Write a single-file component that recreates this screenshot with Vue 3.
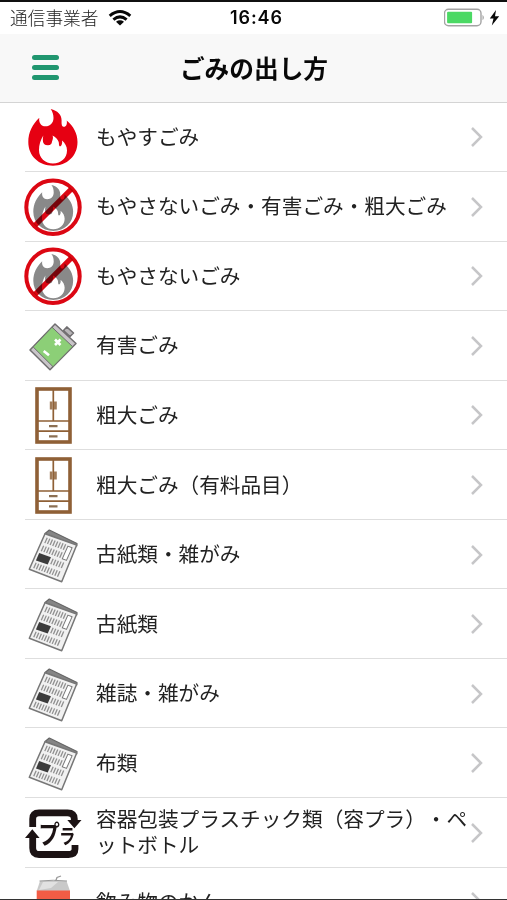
<script setup>
const rows = [
  { icon: 'fire', label: 'もやすごみ' },
  { icon: 'nofire', label: 'もやさないごみ・有害ごみ・粗大ごみ' },
  { icon: 'nofire', label: 'もやさないごみ' },
  { icon: 'battery', label: '有害ごみ' },
  { icon: 'cabinet', label: '粗大ごみ' },
  { icon: 'cabinet', label: '粗大ごみ（有料品目）' },
  { icon: 'paper', label: '古紙類・雑がみ' },
  { icon: 'paper', label: '古紙類' },
  { icon: 'paper', label: '雑誌・雑がみ' },
  { icon: 'paper', label: '布類' },
  { icon: 'plastic', label: '容器包装プラスチック類（容プラ）・ペ\nットボトル' },
  { icon: 'can', label: '飲み物のかん' },
]
const flame =
  'M27.700 2C34.500 3.500 38.800 8 38.600 13.500C38.500 16.500 38.500 19.300 40.500 19.800C43 20.200 44.500 17 43.700 13.500C50.500 19 54.500 26.500 54.500 35C54.500 49 44 58.700 30 58.700C16 58.700 5.300 49 5.300 35C5.300 25 9.500 17.500 16.300 10.700C15.500 15.500 18 19.300 22.500 19.300C27 19.300 30.500 16 30.500 11C30.500 7.500 29.500 4.500 27.700 2Z' +
  'M20.300 28.500C17.500 33 16 38 16 43C16 51 22 56.500 30 56.500C38 56.500 44 51 44 43.500C44 39.500 42 36 39 33.500C39.500 36.500 38.800 38.700 37 39.500C35.500 39 36.200 37 35.700 35C34.700 32 32.500 30 29.500 28.500C30.500 30.500 29.800 32.500 29 34.500C28.800 37 27.500 38.200 25 38.200C21.500 38.200 19.800 36.500 19.800 33C19.800 31.300 20 30 20.300 28.500Z'
</script>

<template>
  <div class="screen">
    <div class="status">
      <span class="carrier">通信事業者</span>
      <svg class="wifi" width="24" height="18" viewBox="0 0 24 18">
        <path d="M1.700 6.800Q12 -1.700 22.300 6.800M5.400 10.600Q12 5.200 18.600 10.600" fill="none" stroke="#080808" stroke-width="3" />
        <path d="M8 12.700Q12 9.800 16 12.700L12 16.500Z" fill="#080808" />
      </svg>
      <span class="time">16:46</span>
      <svg class="battery" width="56" height="20" viewBox="0 0 56 20">
        <rect x="0.500" y="1.200" width="36.500" height="16.600" rx="4" fill="#fff" stroke="#a3a3a3" stroke-width="1.400" />
        <rect x="3.100" y="3.700" width="25" height="11.600" rx="1" fill="#4bd964" />
        <path d="M38.500 6.700Q41.300 9.500 38.500 12.300Z" fill="#a3a3a3" />
        <path d="M52 2L45.800 10.500H49.500L47.800 17.500L55.200 8.300H51Z" fill="#080808" />
      </svg>
    </div>
    <header class="nav">
      <div class="menu"><i></i><i></i><i></i></div>
      <h1>ごみの出し方</h1>
    </header>
    <ul class="list">
      <li v-for="(row, i) in rows" :key="i" class="row">
        <svg class="icon" width="60" height="60" viewBox="0 0 60 60">
          <path v-if="row.icon === 'fire'" :d="flame" fill="#e60012" fill-rule="evenodd" />
          <g v-else-if="row.icon === 'nofire'">
            <path :d="flame" fill="#898989" fill-rule="evenodd" transform="translate(6 6.500) scale(.81)" />
            <circle cx="30" cy="30.300" r="26.700" fill="none" stroke="#dc0713" stroke-width="4" />
            <path class="slash" d="M12 48.300L48.500 11.800" stroke="#dc0713" stroke-width="5.200" />
          </g>
          <g v-else-if="row.icon === 'battery'" stroke="#706e70" stroke-width="1.500" stroke-linejoin="round">
            <path d="M40.500 14.500L43.800 10.900L50.500 17L47 20.500Z" fill="#b8b5b8" />
            <path d="M32 8L53 27.500L27 53.800L7 34Z" fill="#c8c4c8" />
            <path d="M29 11.200L49.700 30.700L30 50.700L10.200 31Z" fill="#8ccf77" stroke-width="1" />
            <path d="M32 23.500L37.500 29M37.500 23.500L32 29M20.700 35L26 39.300" fill="none" stroke="#fff" stroke-width="2.600" />
          </g>
          <g v-else-if="row.icon === 'cabinet'" fill="none" stroke="#8f6036">
            <rect x="14" y="4" width="33" height="53" stroke-width="3.600" />
            <path d="M30.300 5V36M14 36H47M14 46.200H47" stroke-width="1.700" />
            <path d="M28.200 16.500V24.500M32.400 16.500V24.500" stroke="#a07b59" stroke-width="2.800" />
            <path d="M26 41.200H34.500M26 51.300H34.500" stroke="#8c7054" stroke-width="2.200" />
          </g>
          <g v-else-if="row.icon === 'paper'" stroke-linejoin="round">
            <path d="M22 8.500L26.300 5L54 18.500L53.700 21Z" fill="#858585" stroke="#666" stroke-width="1.200" />
            <path d="M22 8.700L53.700 20L38.700 56.700L6.300 44.300Z" fill="#f1f1f1" stroke="#777" stroke-width="1.500" />
            <g transform="matrix(.942 .336 -.403 .914 22 8.700)" fill="none" stroke="#909090">
              <path d="M3 6H24M3 14.800H24M17 24H31M3 33.500H31" stroke-width="6" stroke-dasharray="1.300 1.500" />
              <rect x="26" y="4" width="4.500" height="14" fill="#fff" stroke="#777" stroke-width="1" />
              <rect x="2.500" y="20.300" width="12.500" height="8" fill="#3c3c3c" stroke="none" />
            </g>
          </g>
          <g v-else-if="row.icon === 'plastic'" fill="#1c1314">
            <path d="M9.700 24V16Q9.700 9.900 16 9.900H44.500Q51.300 9.900 51.300 16V18M9.700 32V45Q9.700 51.500 16 51.500H45.500Q52 51.500 52 46V42" fill="none" stroke="#1c1314" stroke-width="6.800" />
            <path d="M44.300 17H58.500L51.400 25.300ZM2 35L9.300 26.300L16.600 35Z" />
            <text x="19" y="41" class="mark" transform="scale(.82 1)">プ<tspan class="small" dx="-1">ラ</tspan></text>
          </g>
          <g v-else>
            <path d="M32.500 9.500L34 5.500L38 4" fill="none" stroke="#999" stroke-width="1.300" />
            <path d="M17 9H43.500L47 19H13.700Z" fill="#c9c9c9" />
            <path d="M20 10H35L28 16L16 18Z" fill="#e1e1e1" />
            <path d="M16.500 9Q30 7.500 44 9" fill="none" stroke="#999" />
            <rect x="13.700" y="18.500" width="33.300" height="41" fill="#f25c45" />
          </g>
        </svg>
        <div class="cell">
          <span class="label">{{ row.label }}</span>
          <svg class="chevron" width="14" height="22" viewBox="0 0 14 22">
            <path d="M2 2L11 11L2 20" fill="none" stroke="#c6c6c8" stroke-width="2.500" />
          </svg>
        </div>
      </li>
    </ul>
  </div>
</template>

<style>
body {
  margin: 0;
  overflow: hidden;
}
</style>

<style scoped>
.screen {
  box-sizing: border-box;
  width: 507px;
  height: 900px;
  overflow: hidden;
  display: flex;
  flex-direction: column;
  background: #fff;
  border-top: 2px solid #101010;
  border-bottom: 1px solid #333;
  color: #222;
  font-family: "Noto Sans CJK JP", sans-serif;
  text-spacing-trim: space-all;
}
.status {
  flex: none;
  height: 32px;
  display: grid;
  grid-template-columns: 98px 132px 1fr 56px;
  align-items: center;
  padding: 0 7px 0 10px;
}
.carrier {
  margin-top: -2px;
  font-size: 17.7px;
  font-weight: 300;
  line-height: 32px;
  white-space: nowrap;
}
.wifi {
  margin-top: -1px;
}
.time {
  margin-left: -10px;
  color: #080808;
  font: 600 18px/32px Inter, sans-serif;
  letter-spacing: .9px;
}
.nav {
  flex: none;
  box-sizing: border-box;
  height: 69px;
  display: grid;
  grid-template-columns: 100px 1fr 100px;
  align-items: center;
  background: #f8f8f8;
  border-bottom: 1px solid #d4d4d4;
}
.menu {
  display: grid;
  gap: 4.600px;
  width: 27px;
  margin: -1px 0 0 32px;
}
.menu i {
  height: 5px;
  border-radius: 2.500px;
  background: #20966f;
}
h1 {
  margin: -2px 0 0 1px;
  text-align: center;
  font-size: 24.700px;
  font-weight: 700;
  line-height: 36px;
  color: #080808;
}
.list {
  flex: none;
  list-style: none;
  margin: -0.500px 0 0;
  padding: 0 0 0 23px;
}
.row {
  height: 69.550px;
  display: flex;
  align-items: center;
  position: relative;
}
.row::after {
  content: "";
  position: absolute;
  left: 2px;
  right: 0;
  bottom: 0;
  height: 1px;
  background: #dedede;
}
.icon {
  flex: none;
}
.slash {
  mix-blend-mode: multiply;
}
.mark {
  font-size: 26px;
  font-weight: 700;
}
.small {
  font-size: 20px;
}
.cell {
  flex: 1;
  display: flex;
  align-items: center;
  justify-content: space-between;
  padding: 0 23px 0 13px;
}
.label {
  width: 374px;
  margin: -3px -14px 0 0;
  flex: none;
  font-size: 20.650px;
  line-height: 26px;
  white-space: pre;
}
.chevron {
  flex: none;
}
</style>
